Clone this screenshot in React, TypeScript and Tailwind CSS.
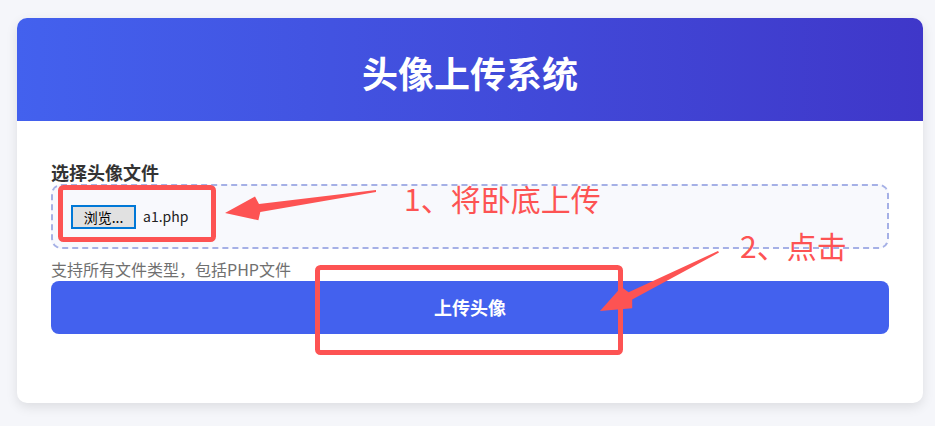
const cjk = { fontFamily: '"Noto Sans CJK SC", "Noto Sans", sans-serif' };

function Annotations() {
  // red markup drawn over the screenshot
  return (
    <svg
      className="pointer-events-none absolute left-0 top-0"
      width={935}
      height={426}
      viewBox="0 0 935 426"
    >
      <rect x={60.5} y={187.5} width={153} height={52} rx={3} fill="none" stroke="#fd5353" strokeWidth={5} />
      <rect x={317.5} y={267.5} width={303} height={85} rx={3} fill="none" stroke="#fd5353" strokeWidth={5} />
      <polygon
        points="376,190 259,204 255,196.5 225,213 258.4,220.3 260.3,212 376,192"
        fill="#fd5353"
      />
      <polygon
        points="718,251 628.6,292.2 621.4,286.9 600,311 632.2,308.3 632.2,299.4 719,252.6"
        fill="#fd5353"
      />
    </svg>
  );
}

export default function App() {
  return (
    <div className="relative min-h-screen w-[935px] overflow-hidden bg-[#f5f6fa] pt-[18px]" style={cjk}>
      <div className="ml-[17px] w-[906px] overflow-hidden rounded-[10px] bg-white shadow-[0_4px_12px_rgba(0,0,0,0.1)]">
        <div className="flex h-[103px] items-center justify-center bg-gradient-to-r from-[#4361ee] to-[#3f37c9] pt-[4px]">
          <h1 className="text-[36px] font-bold leading-none text-white">头像上传系统</h1>
        </div>

        <div className="px-[34px] pb-[69px] pt-[39px]">
          <label className="block text-[18px] font-bold leading-6 text-[#333]">选择头像文件</label>

          <div className="flex h-[65px] items-center gap-[7px] rounded-[10px] border-2 border-dashed border-[#a5b0e6] bg-[#f8f9fd] px-[18px]">
            <button className="flex h-[24px] w-[65px] items-center justify-center border-2 border-[#0078d7] bg-[#e1e1e1] text-[14px] leading-none text-black">
              浏览...
            </button>
            <span className="text-[14px] text-[#222]">a1.php</span>
          </div>

          <p className="mt-[10px] text-[16px] leading-5 text-[#707070]">支持所有文件类型，包括PHP文件</p>

          <button className="mt-[2px] h-[53px] w-full rounded-[8px] bg-[#4361ee] text-[18px] font-bold text-white">
            上传头像
          </button>
        </div>
      </div>

      <span className="absolute left-[404px] top-[180px] text-[30px] leading-9 text-[#fd5353]">1、将卧底上传</span>
      <span className="absolute left-[740px] top-[227px] text-[30px] leading-9 text-[#fd5353]">2、点击</span>

      <Annotations />
    </div>
  );
}
